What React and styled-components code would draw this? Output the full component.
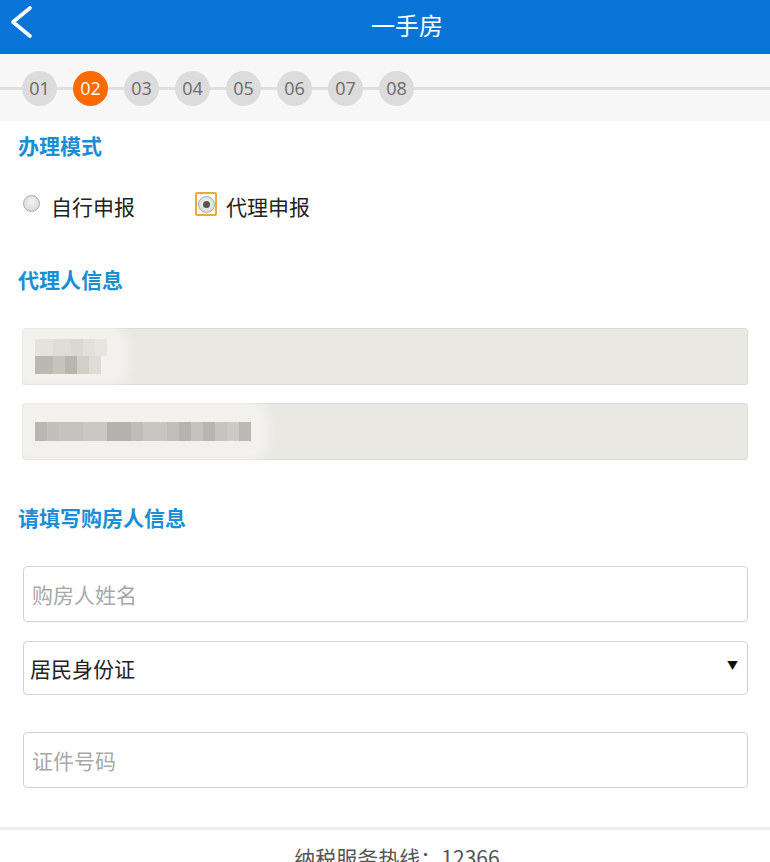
import React from 'react'
import styled, { createGlobalStyle } from 'styled-components'

const GlobalStyle = createGlobalStyle`
   html, body {
      margin: 0;
      padding: 0;
      background: #fff;
      font-family: "Noto Sans CJK SC", "Noto Sans", sans-serif;
   }
`

const Page = styled.div`
   width: 770px;
   height: 862px;
   overflow: hidden;
   background: #fff;
`

const Header = styled.header`
   height: 54px;
   background-color: #0874d8;
   display: flex;
   align-items: center;
   justify-content: center;
   padding-left: 44px;
   position: relative;
`

const BackBtn = styled.button`
   position: absolute;
   left: 6px;
   top: 3px;
   width: 32px;
   height: 38px;
   padding: 0;
   border: none;
   background: none;
   display: flex;
   align-items: center;
   justify-content: center;
`

const Title = styled.h1`
   margin: 0;
   color: #fff;
   font-size: 24px;
   font-weight: 400;
   line-height: 1;
   margin-top: -5px;
`

const StepBar = styled.div`
   height: 67px;
   background-color: #f7f7f7;
   display: flex;
   align-items: center;
   gap: 16px;
   padding: 0 22px;
   position: relative;
   box-sizing: border-box;

   &::before {
      content: '';
      position: absolute;
      left: 0;
      right: 0;
      top: 33px;
      height: 3px;
      background-color: #e0e0e0;
   }
`

const Step = styled.span`
   position: relative;
   width: 35px;
   height: 35px;
   border-radius: 50%;
   display: flex;
   align-items: center;
   justify-content: center;
   font-family: "Open Sans", "Noto Sans", sans-serif;
   font-size: 18px;
   color: ${p => (p.$active ? '#fff' : '#6b6b6b')};
   background-color: ${p => (p.$active ? '#ff6a00' : '#dcdcdc')};
   margin-top: 1px;
`

const Content = styled.main`
   padding: 0 22px;
   display: flex;
   flex-direction: column;
`

const SectionTitle = styled.h2`
   margin: ${p => p.$top}px 0 0 -4px;
   font-size: 21px;
   line-height: 24px;
   font-weight: 700;
   color: #1a8ed5;
`

const RadioRow = styled.div`
   margin-top: 34px;
   height: 30px;
   display: flex;
   align-items: center;
`

const RadioLabel = styled.label`
   display: flex;
   align-items: center;
   font-size: 21px;
   color: #222;
   width: ${p => p.$width}px;
`

const RadioFrame = styled.span`
   width: 22px;
   height: 24px;
   box-sizing: border-box;
   display: flex;
   align-items: center;
   justify-content: center;
   border: 2px solid ${p => (p.$focus ? '#f0a830' : 'transparent')};
   border-radius: 2px;
   margin: ${p => (p.$focus ? '-4px 9px 0 0' : '-6px 9px 0 -2px')};
`

const RadioDot = styled.span`
   width: 17px;
   height: 17px;
   border-radius: 50%;
   box-sizing: border-box;
   border: 1px solid #a9a9a9;
   background: radial-gradient(circle at 50% 40%, #f4f4f4 0%, #d8d8d8 80%);
   display: flex;
   align-items: center;
   justify-content: center;

   &::after {
      content: '';
      display: ${p => (p.$checked ? 'block' : 'none')};
      width: 7px;
      height: 7px;
      border-radius: 50%;
      background: #555;
   }
`

const Locked = styled.div`
   position: relative;
   margin-top: ${p => p.$top}px;
   height: 57px;
   box-sizing: border-box;
   border: 1px solid #dcdcd6;
   border-radius: 3px;
   background-color: #e9e8e2;
   display: flex;
   flex-direction: column;
   justify-content: center;
   padding-left: 12px;

   &::before {
      content: '';
      position: absolute;
      left: -24px;
      top: -8px;
      width: ${p => p.$blob}px;
      height: 66px;
      border-radius: 36px 30px 20px 40px;
      background: rgba(255, 255, 255, 0.4);
      filter: blur(5px);
   }
`

const MosaicRow = styled.div`
   position: relative;
   display: flex;
`

const Cell = styled.span`
   width: ${p => p.$w}px;
   height: ${p => p.$h}px;
   background-color: ${p => p.$c};
`

const Field = styled.div`
   margin-top: ${p => p.$top}px;
   height: ${p => p.$h}px;
   box-sizing: border-box;
   border: 1px solid #d3d3d3;
   border-radius: 4px;
   margin-left: 1px;
   display: flex;
   align-items: center;
   justify-content: space-between;
   padding: 0 9px 0 ${p => p.$pad}px;
   font-size: 21px;
   color: ${p => (p.$placeholder ? '#a8a8a8' : '#222')};
`

const Arrow = styled.span`
   font-size: 11px;
   color: #111;
   margin-top: -6px;
`

const Footer = styled.footer`
   margin-top: 39px;
   border-top: 3px solid #ececec;
   display: flex;
   justify-content: center;
   padding: 12px 0 0 24px;
   font-size: 21px;
   color: #555;
`

const steps = ['01', '02', '03', '04', '05', '06', '07', '08']

const mosaicTop = [
   ['#e3e2dc', 18], ['#dddcd6', 18], ['#d9d8d2', 12], ['#e1e0da', 12], ['#e6e5df', 12],
]
const mosaicBottom = [
   ['#b9b8b2', 18], ['#c4c3bd', 12], ['#b6b5af', 12], ['#d0cfc9', 12], ['#dedcd6', 12],
]
const mosaicWide = [
   ['#b7b6b0', 12], ['#c1c0ba', 12], ['#c4c3bd', 24], ['#c9c8c2', 24], ['#b3b2ac', 24],
   ['#bebdb7', 12], ['#c7c6c0', 24], ['#c0bfb9', 12], ['#b5b4ae', 12], ['#c3c2bc', 12],
   ['#b7b6b0', 12], ['#c6c5bf', 12], ['#cbcac4', 12], ['#bab9b3', 12],
]

function Chevron() {
   return (
      <svg width="28" height="36" viewBox="0 0 28 36">
         <polyline points="22,4 5,18 22,32" fill="none" stroke="#fff" strokeWidth="3.6" strokeLinecap="round" strokeLinejoin="round" />
      </svg>
   )
}

function App() {
   return (
      <Page>
         <GlobalStyle />
         <Header>
            <BackBtn aria-label="返回"><Chevron /></BackBtn>
            <Title>一手房</Title>
         </Header>

         <StepBar>
            {steps.map(s => <Step key={s} $active={s === '02'}>{s}</Step>)}
         </StepBar>

         <Content>
            <SectionTitle $top={12}>办理模式</SectionTitle>
            <RadioRow>
               <RadioLabel $width={173}>
                  <RadioFrame><RadioDot /></RadioFrame>
                  自行申报
               </RadioLabel>
               <RadioLabel>
                  <RadioFrame $focus><RadioDot $checked /></RadioFrame>
                  代理申报
               </RadioLabel>
            </RadioRow>

            <SectionTitle $top={46}>代理人信息</SectionTitle>
            <Locked $top={37} $blob={130}>
               <MosaicRow>
                  {mosaicTop.map(([c, w], i) => <Cell key={i} $c={c} $w={w} $h={17} />)}
               </MosaicRow>
               <MosaicRow>
                  {mosaicBottom.map(([c, w], i) => <Cell key={i} $c={c} $w={w} $h={18} />)}
               </MosaicRow>
            </Locked>
            <Locked $top={18} $blob={270}>
               <MosaicRow>
                  {mosaicWide.map(([c, w], i) => <Cell key={i} $c={c} $w={w} $h={19} />)}
               </MosaicRow>
            </Locked>

            <SectionTitle $top={45}>请填写购房人信息</SectionTitle>
            <Field $top={37} $h={56} $pad={8} $placeholder>购房人姓名</Field>
            <Field $top={19} $h={54} $pad={6}>
               居民身份证
               <Arrow>▼</Arrow>
            </Field>
            <Field $top={37} $h={56} $pad={8} $placeholder>证件号码</Field>
         </Content>

         <Footer>纳税服务热线：12366</Footer>
      </Page>
   )
}

export default App
